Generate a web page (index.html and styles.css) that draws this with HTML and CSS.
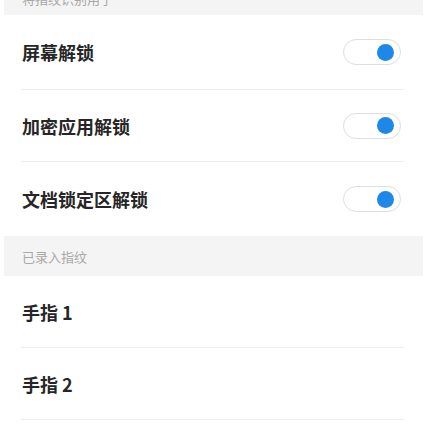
FILE: index.html
```html
<!DOCTYPE html>
<html lang="zh-CN">
<head>
<meta charset="utf-8">
<link rel="stylesheet" href="styles.css">
</head>
<body>
<div class="page">
  <div class="section-head top">将指纹识别用于</div>
  <div class="row"><span class="label">屏幕解锁</span><span class="switch on"><span class="knob"></span></span></div>
  <div class="row"><span class="label">加密应用解锁</span><span class="switch on"><span class="knob"></span></span></div>
  <div class="row last"><span class="label">文档锁定区解锁</span><span class="switch on"><span class="knob"></span></span></div>
  <div class="section-head">已录入指纹</div>
  <div class="row"><span class="label">手指 1</span></div>
  <div class="row"><span class="label">手指 2</span></div>
</div>
</body>
</html>
```
FILE: styles.css
```css
html, body {
  margin: 0;
  padding: 0;
  background: #ffffff;
}
body {
  font-family: "Noto Sans CJK SC", "Noto Sans", sans-serif;
  overflow: hidden;
}
.page {
  padding: 0 4px;
}
.section-head {
  background: #f4f4f4;
  height: 40px;
  display: flex;
  align-items: center;
  padding-left: 18px;
  font-size: 13px;
  color: #a8a8a8;
}
.section-head.top {
  margin-top: -24px;
  height: 39px;
  align-items: flex-end;
  padding-bottom: 10px;
  line-height: 1;
  box-sizing: border-box;
}
.row {
  margin: 0 19px 0 17px;
  height: 72px;
  display: flex;
  align-items: center;
  justify-content: space-between;
  border-bottom: 1px solid #eeeeee;
  box-sizing: border-box;
}
.row.last {
  border-bottom: none;
  height: 74px;
}
.row:nth-child(2) {
  height: 75px;
}
.label {
  font-size: 18px;
  font-weight: 700;
  color: #262626;
  padding-left: 1px;
}
.switch {
  width: 58px;
  height: 26px;
  border: 1.5px solid #dedede;
  border-radius: 14px;
  box-sizing: border-box;
  display: flex;
  align-items: center;
  justify-content: flex-end;
  padding-right: 6px;
  margin-right: 3px;
  background: #fff;
}
.knob {
  width: 17px;
  height: 17px;
  border-radius: 50%;
  background: #1e88e8;
}
```
